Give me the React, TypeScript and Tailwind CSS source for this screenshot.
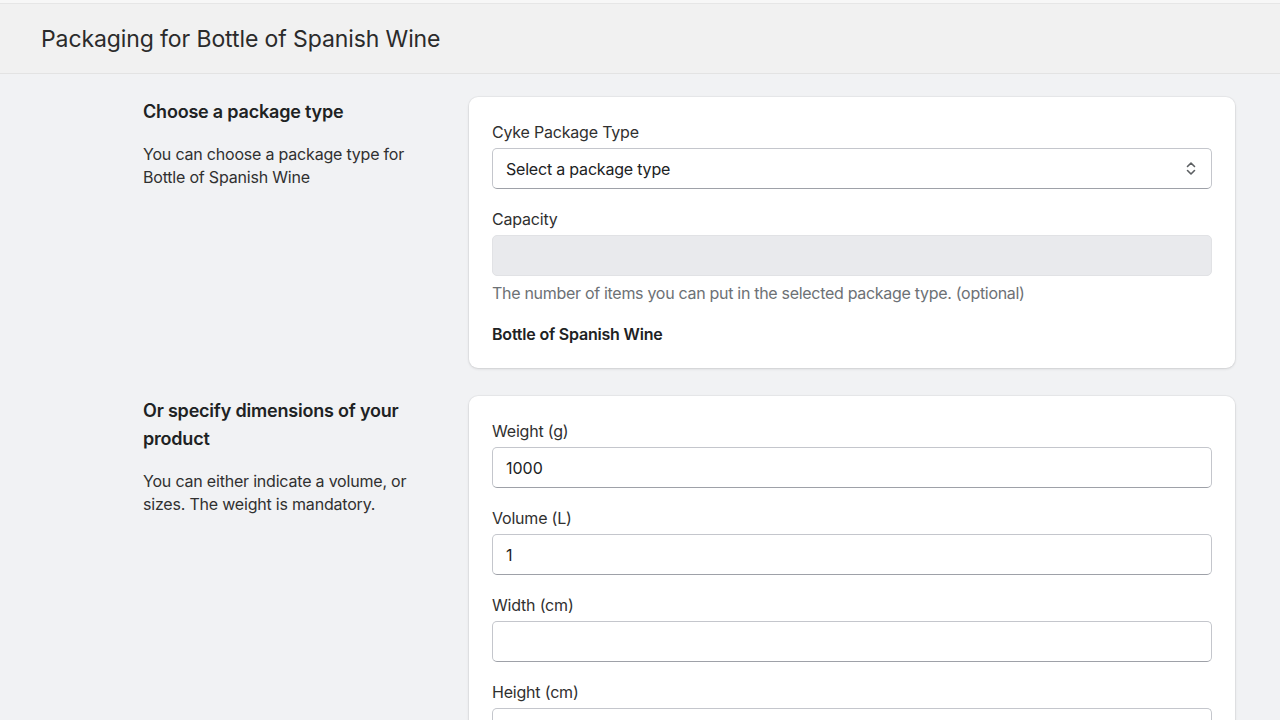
import React from 'react';

const Field: React.FC<{ label: string; value?: string; last?: boolean }> = ({ label, value, last }) => (
    <div className={last ? '' : 'mb-[18px]'}>
        <label className="block text-[16px] leading-6 text-[#303030] mb-1 tracking-[-0.2px]">{label}</label>
        <input
            readOnly
            value={value ?? ''}
            className="w-full h-[41px] rounded-[5px] border border-[#c4c6cc] border-b-[#9ea1a8] bg-white px-[13px] text-[16px] text-[#202223] outline-none"
        />
    </div>
);

const Section: React.FC<{ title: React.ReactNode; text: React.ReactNode; children: React.ReactNode }> = ({ title, text, children }) => (
    <div className="flex">
        <div className="w-[469px] shrink-0 pl-[143px] pr-[40px] pt-[1px]">
            <h2 className="text-[18px] leading-[28px] font-semibold text-[#202223] tracking-[-0.2px]">{title}</h2>
            <p className="mt-[17px] text-[16px] leading-[23px] text-[#303030] tracking-[-0.2px]">{text}</p>
        </div>
        <div className="flex-1 bg-white rounded-[9px] shadow-[0_1px_3px_rgba(0,0,0,0.12),0_0_0_1px_rgba(0,0,0,0.03)] px-[23px] pt-[23px] pb-[22px]">
            {children}
        </div>
    </div>
);

export default function App() {
    return (
        <div className="bg-[#f1f2f4] font-['Inter',sans-serif] overflow-hidden h-[720px]">
            <div className="h-[4px] bg-[#f7f7f7] border-b border-[#e6e6e6]" />
            <header className="h-[70px] bg-[#f1f1f1] border-b border-[#e3e3e3] flex items-center pl-[41px] pt-[2px]">
                <h1 className="text-[23px] text-[#2b2b2b] tracking-[-0.1px]">Packaging for Bottle of Spanish Wine</h1>
            </header>
            <main className="pr-[45px] pt-[23px] flex flex-col gap-[28px]">
                <Section
                    title="Choose a package type"
                    text={<>You can choose a package type for Bottle of Spanish Wine</>}
                >
                    <label className="block text-[16px] leading-6 text-[#303030] mb-1 tracking-[-0.2px]">Cyke Package Type</label>
                    <div className="relative mb-[18px]">
                        <div className="w-full h-[41px] rounded-[5px] border border-[#c4c6cc] border-b-[#9ea1a8] bg-white px-[13px] flex items-center text-[16px] text-[#202223] tracking-[-0.2px]">
                            Select a package type
                        </div>
                        <svg className="absolute right-[14px] top-[13px] w-[14px] h-[15px] text-[#5c5f62]" viewBox="0 0 14 15" fill="none" stroke="currentColor" strokeWidth="1.6" strokeLinecap="round" strokeLinejoin="round">
                            <path d="M3.5 5.5 7 2l3.5 3.5" />
                            <path d="M3.5 9.5 7 13l3.5-3.5" />
                        </svg>
                    </div>
                    <label className="block text-[16px] leading-6 text-[#303030] mb-1 tracking-[-0.2px]">Capacity</label>
                    <div className="w-full h-[41px] rounded-[5px] border border-[#e1e2e5] bg-[#e9eaed]" />
                    <p className="mt-[5px] text-[16px] leading-6 text-[#6d7175] tracking-[-0.3px]">The number of items you can put in the selected package type. (optional)</p>
                    <p className="mt-[17px] text-[16px] leading-6 font-semibold text-[#202223] tracking-[-0.2px]">Bottle of Spanish Wine</p>
                </Section>
                <Section
                    title="Or specify dimensions of your product"
                    text="You can either indicate a volume, or sizes. The weight is mandatory."
                >
                    <Field label="Weight (g)" value="1000" />
                    <Field label="Volume (L)" value="1" />
                    <Field label="Width (cm)" />
                    <Field label="Height (cm)" />
                    <Field label="Length (cm)" last />
                </Section>
            </main>
        </div>
    );
}
